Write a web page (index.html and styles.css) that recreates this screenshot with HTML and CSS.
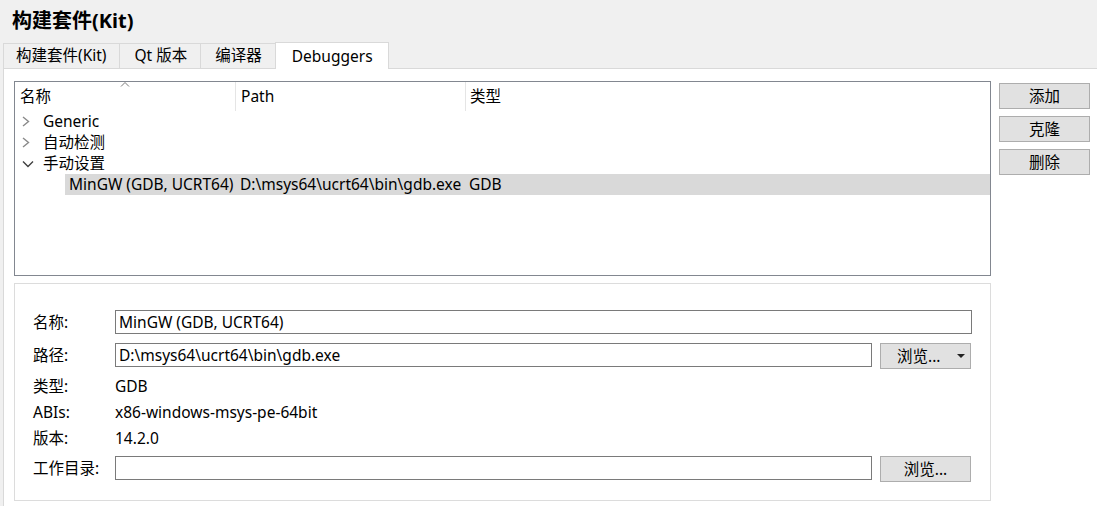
FILE: index.html
```html
<!DOCTYPE html>
<html lang="zh">
<head>
<meta charset="utf-8">
<title>构建套件(Kit)</title>
<link rel="stylesheet" href="styles.css">
</head>
<body>
<h1 class="title">构建套件(Kit)</h1>
<div class="tabs">
  <div class="tab">构建套件(Kit)</div>
  <div class="tab">Qt 版本</div>
  <div class="tab">编译器</div>
  <div class="tab active">Debuggers</div>
</div>
<div class="pane">
  <div class="main">
    <div class="tree">
      <div class="header">
        <div class="hcell c1">名称<span class="sort"><svg width="10" height="6" viewBox="0 0 10 6"><path d="M1 5.5 L5 1.5 L9 5.5" fill="none" stroke="#7a7a7a" stroke-width="1"/></svg></span></div>
        <div class="hcell c2">Path</div>
        <div class="hcell c3">类型</div>
      </div>
      <div class="row"><span class="arrow"><svg width="8" height="11" viewBox="0 0 8 11"><path d="M1 1 L6.5 5.5 L1 10" fill="none" stroke="#8a8a8a" stroke-width="1.4"/></svg></span><span class="label">Generic</span></div>
      <div class="row"><span class="arrow"><svg width="8" height="11" viewBox="0 0 8 11"><path d="M1 1 L6.5 5.5 L1 10" fill="none" stroke="#8a8a8a" stroke-width="1.4"/></svg></span><span class="label">自动检测</span></div>
      <div class="row"><span class="arrow"><svg width="12" height="8" viewBox="0 0 12 8"><path d="M1 1.5 L6 6.5 L11 1.5" fill="none" stroke="#404040" stroke-width="1.4"/></svg></span><span class="label">手动设置</span></div>
      <div class="row child selected">
        <span class="cell d1">MinGW (GDB, UCRT64)</span>
        <span class="cell d2">D:\msys64\ucrt64\bin\gdb.exe</span>
        <span class="cell d3">GDB</span>
      </div>
    </div>
    <div class="details">
      <div class="frow r1"><span class="flabel">名称:</span><div class="input wide">MinGW (GDB, UCRT64)</div></div>
      <div class="frow r2"><span class="flabel">路径:</span><div class="input">D:\msys64\ucrt64\bin\gdb.exe</div><div class="btn browse drop"><span>浏览...</span><svg class="caret" width="8" height="4" viewBox="0 0 8 4"><path d="M0 0 H8 L4 4 Z" fill="#222"/></svg></div></div>
      <div class="frow text r3"><span class="flabel">类型:</span><span>GDB</span></div>
      <div class="frow text"><span class="flabel">ABIs:</span><span>x86-windows-msys-pe-64bit</span></div>
      <div class="frow text"><span class="flabel">版本:</span><span>14.2.0</span></div>
      <div class="frow r6"><span class="flabel">工作目录:</span><div class="input"></div><div class="btn browse">浏览...</div></div>
    </div>
  </div>
  <div class="side">
    <div class="btn sbtn">添加</div>
    <div class="btn sbtn">克隆</div>
    <div class="btn sbtn">删除</div>
  </div>
</div>
</body>
</html>
```
FILE: styles.css
```css
* { box-sizing: border-box; }
html, body { margin: 0; padding: 0; }
body {
  background: #f0f0f0;
  font-family: "Noto Sans", "Noto Sans CJK SC", sans-serif;
  font-size: 15.5px;
  color: #000;
  width: 1097px;
  height: 506px;
  overflow: hidden;
}
.title {
  margin: 0;
  padding: 8px 0 0 12px;
  height: 42px;
  font-size: 20px;
  font-weight: bold;
  line-height: 26px;
}
.tabs {
  display: flex;
  align-items: flex-end;
  margin-left: 3px;
  height: 26px;
  position: relative;
  z-index: 1;
}
.tab {
  height: 25px;
  line-height: 23px;
  padding: 0 12px 0 12px;
  border: 1px solid #d9d9d9;
  border-left: none;
  border-bottom: none;
  background: #f0f0f0;
}
.tab:first-child { border-left: 1px solid #d9d9d9; }
.tab:nth-child(2) { padding: 0 13px 0 15px; }
.tab:nth-child(3) { padding: 0 13px 0 14px; }
.tab.active {
  height: 27px;
  background: #fff;
  margin-left: -1px;
  border-left: 1px solid #d9d9d9;
  padding: 0 15px 0 16px;
  line-height: 26px;
  margin-bottom: -1px;
}
.pane {
  margin-left: 3px;
  background: #fff;
  border-left: 1px solid #d9d9d9;
  border-top: 1px solid #d9d9d9;
  padding: 12px 0 0 10px;
  display: flex;
  gap: 8px;
  height: 438px;
}
.main {
  width: 977px;
  display: flex;
  flex-direction: column;
  gap: 7px;
}
.tree {
  height: 195px;
  border: 1px solid #828790;
  background: #fff;
}
.header {
  display: flex;
  height: 29px;
}
.hcell {
  position: relative;
  line-height: 29px;
  padding-left: 5px;
  border-right: 1px solid #e5e5e5;
  height: 29px;
}
.hcell.c1 { width: 221px; }
.hcell.c2 { width: 230px; padding-left: 5px; }
.hcell.c3 { flex: 1; border-right: none; padding-left: 4px; }
.sort {
  position: absolute;
  left: 105px;
  top: -1px;
  line-height: 0;
}
.row {
  height: 21px;
  line-height: 21px;
  display: flex;
  align-items: center;
}
.arrow {
  width: 28px;
  display: flex;
  justify-content: flex-start;
  padding-left: 7px;
}
.row.child {
  margin-left: 50px;
}
.row.selected { background: #d9d9d9; }
.cell.d1 { width: 171px; padding-left: 4px; white-space: nowrap; }
.cell.d2 { width: 230px; padding-left: 4px; white-space: nowrap; }
.cell.d3 { padding-left: 3px; }
.details {
  height: 218px;
  border: 1px solid #dcdcdc;
  padding: 26px 18px 0 18px;
  display: flex;
  flex-direction: column;
}
.frow {
  display: flex;
  align-items: flex-start;
  height: 26px;
}
.frow.r1 { height: 24px; margin-bottom: 9px; }
.frow.r3 { margin-top: 4px; }
.frow.r6 { margin-top: 5px; }
.frow.text { align-items: center; }
.flabel {
  width: 82px;
  flex: none;
  line-height: 24px;
}
.frow.text .flabel { line-height: 26px; }
.input {
  height: 24px;
  border: 1px solid #7a7a7a;
  background: #fff;
  line-height: 22px;
  padding-left: 3px;
  width: 757px;
}
.input.wide { width: 857px; }
.btn {
  background: #e1e1e1;
  border: 1px solid #adadad;
  text-align: center;
  height: 26px;
  line-height: 24px;
}
.browse {
  width: 91px;
  margin-left: 8px;
}
.browse.drop {
  display: flex;
  align-items: center;
  padding-left: 16px;
}
.caret { margin-left: 17px; }
.side {
  display: flex;
  flex-direction: column;
  gap: 7px;
  padding-top: 2px;
}
.sbtn { width: 91px; }
```
